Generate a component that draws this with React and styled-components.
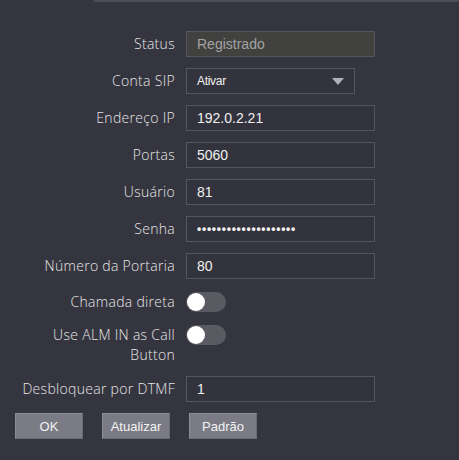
import React from "react";
import styled, { createGlobalStyle } from "styled-components";

const GlobalStyle = createGlobalStyle`
  html, body {
    margin: 0;
    padding: 0;
    background: #35353f;
  }
`;

const Page = styled.div`
  width: 459px;
  height: 460px;
  background: #35353f;
  font-family: "Open Sans", "Noto Sans", sans-serif;
  color: #dcdcdc;
  overflow: hidden;
`;

const TopLine = styled.div`
  margin-left: 94px;
  height: 2px;
  background: #4c4c56;
`;

const Form = styled.div`
  display: grid;
  grid-template-columns: 162px 189px;
  column-gap: 11px;
  row-gap: 11px;
  padding: 29px 0 0 13px;
  align-items: center;
`;

const Label = styled.div`
  text-align: right;
  font-size: 14px;
  font-weight: 300;
  line-height: 20px;
  letter-spacing: 0.3px;
  color: #e6e6e6;
  min-height: ${(p) => (p.$toggle ? "24px" : "auto")};
  display: flex;
  align-items: center;
  justify-content: flex-end;
`;

const Input = styled.div`
  box-sizing: border-box;
  height: 26px;
  width: ${(p) => p.$w || "189px"};
  border: 1px solid #555560;
  background: ${(p) => (p.$disabled ? "#41423f" : "#33333d")};
  color: ${(p) => (p.$disabled ? "#a3a3a3" : "#f0f0f0")};
  font-family: "Liberation Sans", Arial, sans-serif;
  font-size: 14px;
  padding-left: 10px;
  display: flex;
  align-items: center;
`;

const SelectBox = styled(Input)`
  font-size: 12px;
  letter-spacing: -0.3px;
  justify-content: space-between;
  padding-right: 10px;
`;

const Arrow = styled.span`
  width: 0;
  height: 0;
  border-left: 6px solid transparent;
  border-right: 6px solid transparent;
  border-top: 7px solid #b0b0b8;
`;

const Dots = styled.span`
  font-size: 12px;
  letter-spacing: 0.75px;
  font-weight: bold;
`;

const Toggle = styled.div`
  width: 40px;
  height: 20px;
  border-radius: 10px;
  background: #5a5a62;
  position: relative;
  &::after {
    content: "";
    position: absolute;
    left: 1px;
    top: 1px;
    width: 18px;
    height: 18px;
    border-radius: 50%;
    background: #ffffff;
  }
`;

const ToggleCell = styled.div`
  align-self: start;
  padding-top: ${(p) => p.$top || "0px"};
`;

const Buttons = styled.div`
  display: flex;
  gap: 19px;
  padding: 11px 0 0 15px;
`;

const Button = styled.button`
  width: 68px;
  height: 26px;
  background: #7b7b85;
  border: none;
  border-top: 1px solid #8c8c96;
  border-left: 1px solid #8c8c96;
  border-bottom: 1px solid #6a6a72;
  border-right: 1px solid #6a6a72;
  color: #f2f2f2;
  font-family: "Liberation Sans", Arial, sans-serif;
  font-size: 13px;
  padding: 0;
`;

const fields = [
  { label: "Endereço IP", value: "192.0.2.21" },
  { label: "Portas", value: "5060" },
  { label: "Usuário", value: "81" },
];

export default function App() {
  return (
    <Page>
      <GlobalStyle />
      <TopLine />
      <Form>
        <Label>Status</Label>
        <Input $disabled>Registrado</Input>

        <Label>Conta SIP</Label>
        <SelectBox $w="169px">
          Ativar
          <Arrow />
        </SelectBox>

        {fields.map((f) => (
          <React.Fragment key={f.label}>
            <Label>{f.label}</Label>
            <Input>{f.value}</Input>
          </React.Fragment>
        ))}

        <Label>Senha</Label>
        <Input>
          <Dots>••••••••••••••••••••</Dots>
        </Input>

        <Label>Número da Portaria</Label>
        <Input>80</Input>

        <Label $toggle>Chamada direta</Label>
        <ToggleCell $top="2px">
          <Toggle />
        </ToggleCell>

        <Label $toggle>Use ALM IN as Call Button</Label>
        <ToggleCell>
          <Toggle />
        </ToggleCell>

        <Label>Desbloquear por DTMF</Label>
        <Input>1</Input>
      </Form>
      <Buttons>
        <Button>OK</Button>
        <Button>Atualizar</Button>
        <Button>Padrão</Button>
      </Buttons>
    </Page>
  );
}
